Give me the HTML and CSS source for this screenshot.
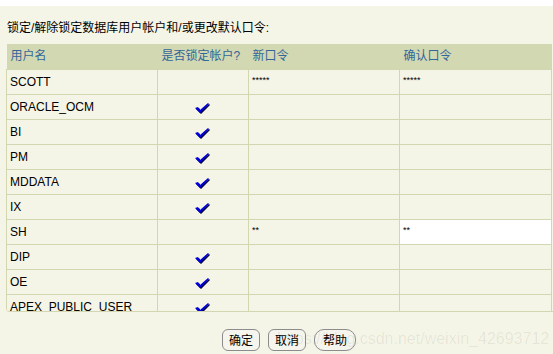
FILE: index.html
```html
<!DOCTYPE html>
<html lang="zh-CN">
<head>
  <meta charset="UTF-8">
  <title>锁定/解除锁定用户</title>
  <link rel="stylesheet" href="styles.css">
</head>
<body>
<div class="top-strip"></div>
<div class="page">
  <p class="title">锁定/解除锁定数据库用户帐户和/或更改默认口令:</p>
  <div class="grid-wrap">
    <table class="grid">
      <colgroup>
        <col class="c-user">
        <col class="c-lock">
        <col class="c-pwd">
        <col class="c-confirm">
      </colgroup>
      <thead>
        <tr>
          <th>用户名</th>
          <th>是否锁定帐户?</th>
          <th>新口令</th>
          <th>确认口令</th>
        </tr>
      </thead>
      <tbody id="user-rows"></tbody>
    </table>
  </div>
  <div class="actions">
    <button class="btn">确定</button>
    <button class="btn">取消</button>
    <button class="btn">帮助</button>
  </div>
  <div class="watermark">https://blog.csdn.net/weixin_42693712</div>
</div>
<script>
  const users = [
    { name: 'SCOTT', locked: false, pwd: '*****', confirm: '*****' },
    { name: 'ORACLE_OCM', locked: true },
    { name: 'BI', locked: true },
    { name: 'PM', locked: true },
    { name: 'MDDATA', locked: true },
    { name: 'IX', locked: true },
    { name: 'SH', locked: false, pwd: '**', confirm: '**', editing: true },
    { name: 'DIP', locked: true },
    { name: 'OE', locked: true },
    { name: 'APEX_PUBLIC_USER', locked: true }
  ];

  const check = `
    <svg class="check" width="16" height="12" viewBox="0 0 16 12">
      <polygon points="1,6 4,5 6,8 14,1 15,2 6,11" fill="#000040"/>
      <polygon points="0,5 3,4 5,7 13,0 14,1 5,10" fill="#0000dd"/>
    </svg>`;

  const tbody = document.getElementById('user-rows');
  users.forEach(u => {
    const tr = document.createElement('tr');
    tr.innerHTML = `
      <td>${u.name}</td>
      <td class="lock">${u.locked ? check : ''}</td>
      <td class="pwd">${u.pwd || ''}</td>
      <td class="pwd${u.editing ? ' editing' : ''}">${u.confirm || ''}</td>
    `;
    tbody.appendChild(tr);
  });
</script>
</body>
</html>
```

FILE: styles.css
```css
body {
  margin: 0;
  background: #f5f5e7;
  font-family: 'Liberation Sans', 'Noto Sans CJK SC', sans-serif;
  font-size: 12px;
  color: #000;
}

.top-strip {
  height: 6px;
  background: #fff;
}

.page {
  position: relative;
  height: 348px;
  overflow: hidden;
}

.title {
  margin: 15px 0 9px 7px;
  line-height: 14px;
}

.grid-wrap {
  margin-left: 6px;
  width: 547px;
  height: 267px;
  overflow: hidden;
  border-bottom: 1px solid #d3d7b1;
  border-bottom-left-radius: 4px;
}

.grid {
  border-collapse: collapse;
  width: 545px;
  table-layout: fixed;
}

.c-user { width: 151px; }
.c-lock { width: 91px; }
.c-pwd { width: 151px; }
.c-confirm { width: 152px; }

.grid thead tr {
  background: #d2d8b1;
}

.grid th {
  height: 25px;
  box-sizing: border-box;
  line-height: 14px;
  text-align: left;
  font-weight: normal;
  color: #336699;
  padding: 0 4px;
  white-space: nowrap;
}

.grid td {
  height: 25px;
  box-sizing: border-box;
  line-height: 14px;
  padding: 0 3px;
  border: 1px solid #d3d7b1;
  white-space: nowrap;
  overflow: hidden;
}

.grid td.lock {
  padding: 0;
}

.check {
  display: block;
  margin: 4px auto 0;
}

.grid td.pwd {
  font-size: 9px;
  line-height: 10px;
  vertical-align: top;
  padding-top: 5px;
}

.grid td.editing {
  background: #fff;
}

.actions {
  display: flex;
  gap: 8px;
  padding: 17px 0 0 222px;
}

.btn {
  height: 22px;
  padding: 0 6px;
  min-width: 36px;
  border: 1px solid #8c8c8c;
  border-radius: 6px;
  background: #f5f5ee;
  font-family: 'Noto Sans CJK SC', sans-serif;
  font-size: 12px;
  line-height: 14px;
  color: #000;
  cursor: pointer;
}

.btn:last-child {
  min-width: 42px;
  border-radius: 10px;
}

.watermark {
  position: absolute;
  left: 277px;
  top: 324px;
  font-family: 'Liberation Sans', sans-serif;
  font-size: 16px;
  color: rgba(0, 0, 0, 0.07);
  white-space: nowrap;
  pointer-events: none;
}
```
